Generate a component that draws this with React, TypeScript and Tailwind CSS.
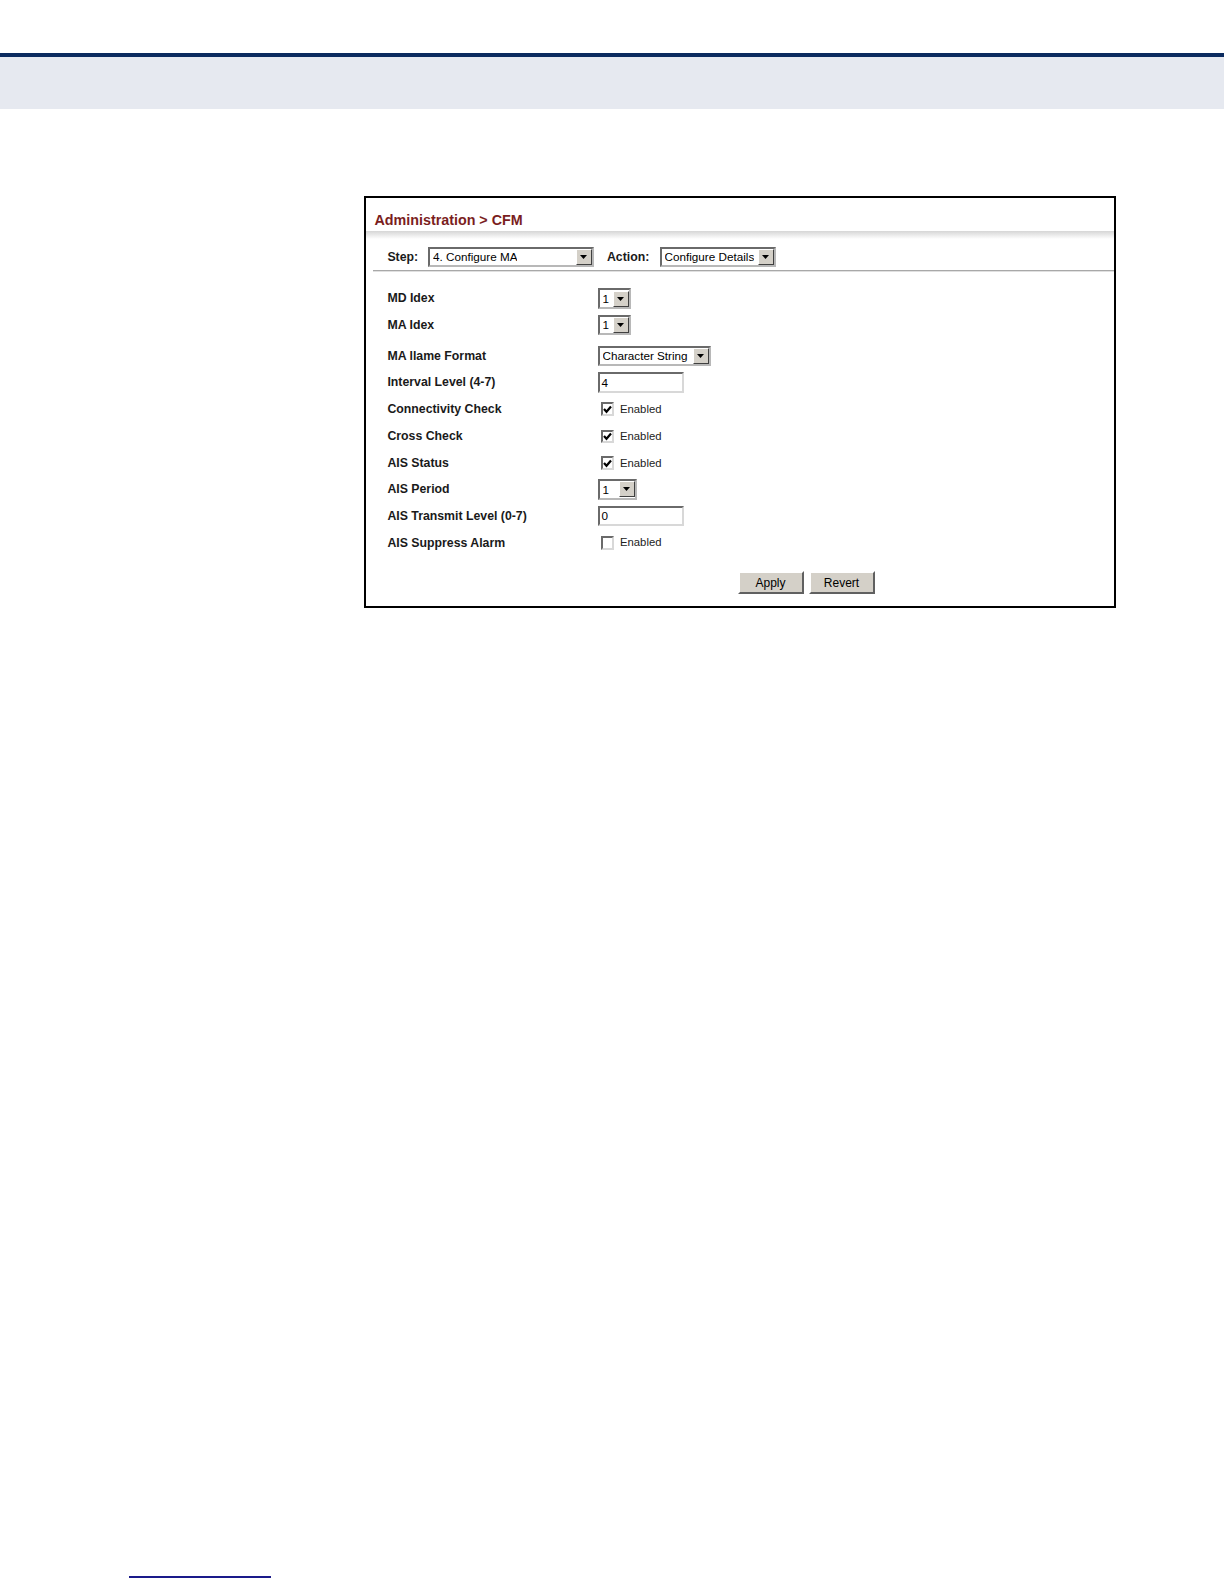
import React from 'react';

const font = { fontFamily: '"Liberation Sans", Arial, sans-serif' };

function Arrow() {
  return (
    <div className="w-[16px] h-[16px] bg-[#d4d0c8] border border-t-white border-l-white border-b-[#404040] border-r-[#404040] flex items-center justify-center shrink-0">
      <svg width="7" height="4" viewBox="0 0 7 4">
        <polygon points="0,0 7,0 3.5,4" fill="#000" />
      </svg>
    </div>
  );
}

function Select({ value, width }: { value: string; width: string }) {
  return (
    <div className={`${width} h-[20.5px] flex items-center justify-between bg-white border-2 border-t-[#6a6a6a] border-l-[#6a6a6a] border-b-[#b8b8b8] border-r-[#b8b8b8] pl-[3px]`}>
      <span className="text-[11.7px] leading-none text-black whitespace-nowrap overflow-hidden">{value}</span>
      <Arrow />
    </div>
  );
}

function TextBox({ value }: { value: string }) {
  return (
    <div className="w-[86px] h-[20.5px] flex items-center bg-white border-2 border-t-[#6a6a6a] border-l-[#6a6a6a] border-b-[#d8d8d8] border-r-[#d8d8d8] pl-[2px]">
      <span className="text-[11.7px] leading-none text-black">{value}</span>
    </div>
  );
}

function Check({ on }: { on: boolean }) {
  return (
    <div className="flex items-center ml-[3px]">
      <div className="w-[13.5px] h-[13.5px] bg-white border-2 border-t-[#6a6a6a] border-l-[#6a6a6a] border-b-[#d8d8d8] border-r-[#d8d8d8] flex items-center justify-center">
        {on && (
          <svg width="9" height="9" viewBox="0 0 9 9">
            <path d="M1 4 L3.5 6.8 L8 1.5" stroke="#000" strokeWidth="2.2" fill="none" />
          </svg>
        )}
      </div>
      <span className="ml-[6px] text-[11.3px] text-[#222]">Enabled</span>
    </div>
  );
}

function Row({ label, children, h, extra = '' }: { label: string; children: React.ReactNode; h: string; extra?: string }) {
  return (
    <div className={`flex items-center ${h} ${extra}`}>
      <div className="w-[231.5px] pl-[21.4px] text-[12.3px] font-bold text-[#1a1a1a]">{label}</div>
      <div className="flex items-center">{children}</div>
    </div>
  );
}

function Btn({ label }: { label: string }) {
  return (
    <div className="w-[66px] h-[23px] bg-[#d4d0c8] border-2 border-t-white border-l-white border-b-[#606060] border-r-[#606060] flex items-center justify-center text-[12px] text-black">
      {label}
    </div>
  );
}

export default function App() {
  return (
    <div className="w-[1224px] h-[1584px] bg-white flex flex-col" style={font}>
      <div className="h-[53px]" />
      <div className="h-[3.5px] bg-[#0b2b5f]" />
      <div className="h-[52.5px] bg-[#e6e9f0]" />

      <div className="pt-[87px] pl-[364px]">
        <div className="w-[752px] h-[412px] border-2 border-black bg-white">
          <div className="pt-[12.5px] pl-[8.5px] h-[33px] text-[14.3px] font-bold text-[#7a1e1e] leading-[18px]">
            Administration &gt; CFM
          </div>
          <div className="h-[8px] bg-gradient-to-b from-[#d6d6d6] to-white" />
          <div className="flex items-center h-[31px] pl-[21.4px] pt-[5px]">
            <span className="w-[40.6px] text-[12.3px] font-bold text-[#1a1a1a]">Step:</span>
            <Select value="4. Configure MA" width="w-[166px]" />
            <span className="ml-[13px] w-[52.6px] text-[12.3px] font-bold text-[#1a1a1a]">Action:</span>
            <Select value="Configure Details" width="w-[116px]" />
          </div>
          <div className="ml-[7px] h-[2px] bg-[#a8a8a8] border-b border-[#e0e0e0]" />

          <div className="pt-[13.4px]">
            <Row label="MD Idex" h="h-[26.3px]">
              <Select value="1" width="w-[33px]" />
            </Row>
            <Row label="MA Idex" h="h-[26.3px]">
              <Select value="1" width="w-[33px]" />
            </Row>
            <Row label="MA llame Format" h="h-[26.4px]" extra="mt-[5px]">
              <Select value="Character String" width="w-[113px]" />
            </Row>
            <Row label="Interval Level (4-7)" h="h-[26.3px]">
              <TextBox value="4" />
            </Row>
            <Row label="Connectivity Check" h="h-[27px]">
              <Check on />
            </Row>
            <Row label="Cross Check" h="h-[27.3px]">
              <Check on />
            </Row>
            <Row label="AIS Status" h="h-[26.3px]">
              <Check on />
            </Row>
            <Row label="AIS Period" h="h-[26.3px]">
              <Select value="1" width="w-[39px]" />
            </Row>
            <Row label="AIS Transmit Level (0-7)" h="h-[27.3px]">
              <TextBox value="0" />
            </Row>
            <Row label="AIS Suppress Alarm" h="h-[26px]">
              <Check on={false} />
            </Row>
          </div>

          <div className="flex gap-[5px] pl-[371.5px] pt-[15.4px]">
            <Btn label="Apply" />
            <Btn label="Revert" />
          </div>
        </div>
      </div>

      <div className="mt-auto mb-[6.5px] ml-[128.5px] w-[142.5px] h-[1.5px] bg-[#1a1a8a]" />
    </div>
  );
}
